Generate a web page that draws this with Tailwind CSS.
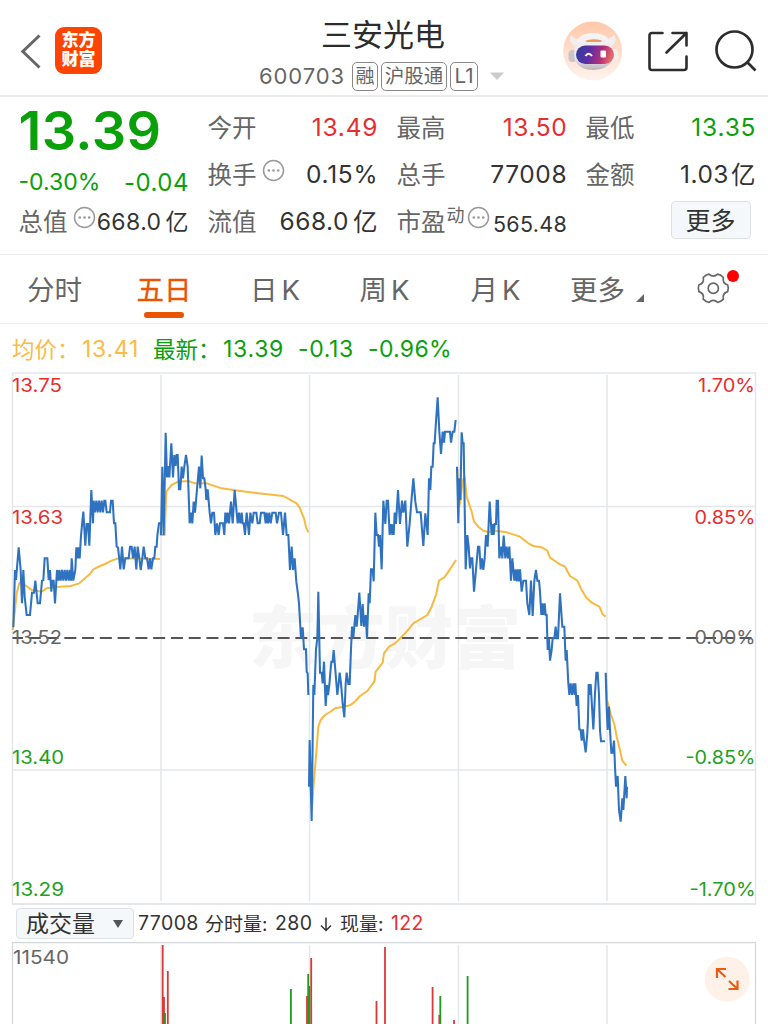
<!DOCTYPE html>
<html lang="zh-CN">
<head>
<meta charset="utf-8">
<title>三安光电 600703</title>
<script src="https://cdn.jsdelivr.net/npm/@tailwindcss/browser@4"></script>
</head>
<body class="w-[768px] h-[1024px] overflow-hidden bg-white font-['Inter','Noto_Sans_CJK_SC',sans-serif] text-[#333] whitespace-nowrap">
<div class="flex h-[1024px] flex-col overflow-hidden">

<!-- Title bar -->
<header class="flex h-[97px] shrink-0 border-b-2 border-[#ececec]">
  <div class="flex w-[259px] items-start pl-[20px] pt-[27px]">
    <svg class="mt-[7px] h-[36px] w-[22px]" viewBox="0 0 22 36" fill="none" stroke="#666" stroke-width="3"><path d="M19.5 1.5 2.8 17.5 19.5 33.5"/></svg>
    <div class="ml-[13px] flex h-[47px] w-[47px] flex-col items-center justify-center rounded-[9px] bg-[#ff4400] pb-px text-[17px] font-black leading-[19px] text-white"><span>东方</span><span>财富</span></div>
  </div>
  <div class="flex w-[249px] flex-col">
    <h1 class="mt-[13px] pl-[62px] text-[31px] leading-[44px] text-[#2c2c2c]">三安光电</h1>
    <div class="mt-[4px] flex h-[30px] items-center text-[#666]">
      <span class="w-[93px] text-[22px] tracking-[0.9px]">600703</span>
      <span class="flex h-[29px] w-[26px] items-center justify-center rounded-[5px] border border-[#888] pt-[2px] text-[19px]">融</span>
      <span class="ml-[3px] flex h-[29px] w-[66px] items-center justify-center rounded-[5px] border border-[#888] pt-[2px] text-[19.5px]">沪股通</span>
      <span class="ml-[3px] flex h-[29px] w-[28px] items-center justify-center rounded-[5px] border border-[#888] text-[20.5px]">L1</span>
      <svg class="ml-[12px] h-[8px] w-[14px] shrink-0" viewBox="0 0 14 8"><path d="M0 .5h14L7 8z" fill="#ccc"/></svg>
    </div>
  </div>
  <div class="flex items-start pl-[55px] pt-[21px]">
    <svg class="h-[60px] w-[60px]" viewBox="0 0 60 60">
      <defs>
        <linearGradient id="halo" x1="0" y1="0" x2="0" y2="1"><stop offset="0" stop-color="#ffc8a8"/><stop offset="1" stop-color="#fff3ee"/></linearGradient>
        <linearGradient id="head" x1="0" y1="0" x2="0" y2="1"><stop offset="0" stop-color="#f8f5f6"/><stop offset=".7" stop-color="#e9e5e8"/><stop offset="1" stop-color="#b9b5bd"/></linearGradient>
        <linearGradient id="visor" x1="0" y1="0" x2="1" y2=".15"><stop offset="0" stop-color="#2f3f9c"/><stop offset=".4" stop-color="#5a2fa6"/><stop offset=".75" stop-color="#b82e78"/><stop offset="1" stop-color="#e46a6a"/></linearGradient>
      </defs>
      <circle cx="29.700" cy="30" r="29.500" fill="url(#halo)"/>
      <path d="M8 14Q5 20 11 25L18 18Q11 19 8 14ZM51 13Q55 20 49 25L41 18Q49 18 51 13Z" fill="#f3eef0"/>
      <rect x="5.500" y="29" width="8" height="12" rx="4" fill="#c9c4cb"/><rect x="47" y="28" width="8" height="12" rx="4" fill="#f3eff2"/>
      <path d="M12 26Q14 12 30 12Q46 12 49 26Q54 48 30 49Q7 48 12 26Z" fill="url(#head)"/>
      <path d="M22 20Q29 17 39 19.500L38 21H24Z" fill="#e99a5c"/>
      <rect x="13" y="24.500" width="38" height="18.500" rx="9.200" fill="url(#visor)"/>
      <path d="M22.500 35Q25.500 30.500 29 35" fill="none" stroke="#fff" stroke-width="2"/>
      <rect x="37.500" y="29.500" width="5.500" height="7" rx="1" fill="#fff"/>
    </svg>
    <svg class="ml-[24px] mt-[8.500px] h-[42px] w-[42px]" viewBox="0 0 42 42" fill="none" stroke="#2d2d2d" stroke-width="2.600" stroke-linecap="round" stroke-linejoin="round"><path d="M15.500 3H5Q2.500 3 2.500 5.500V37.500Q2.500 40 5 40H37Q39.500 40 39.500 37.500V26.500M25.500 3H39.500V15.500M39.500 3 19.500 22.500"/></svg>
    <svg class="ml-[25px] mt-[8px] h-[44px] w-[44px]" viewBox="0 0 44 44" fill="none" stroke="#2d2d2d" stroke-width="2.700"><circle cx="20.500" cy="20.500" r="18"/><path d="M32.800 32.800 41.500 41.500"/></svg>
  </div>
</header>

<!-- Quote summary -->
<section class="grid h-[158px] shrink-0 grid-cols-[170px_170px_170px_170px] grid-rows-[47px_47px_47px] gap-x-[19px] border-b border-[#eee] pl-[18.500px] pt-[7px] text-[24.500px]">
  <div class="row-span-2 flex flex-col text-[#0aa00a]">
    <div class="text-[54px] font-semibold leading-[54px] tracking-[0.400px]">13.39</div>
    <div class="mt-[10px] flex items-center justify-between leading-[26px]"><span class="text-[23px]">-0.30%</span><span class="mr-[-0.500px] pt-[2px] text-[24px] tracking-[0.500px]">-0.04</span></div>
  </div>
  <div class="flex items-center justify-between"><span class="pt-[2px] text-[#666]">今开</span><span class="mr-[-0.800px] text-[24.500px] tracking-[0.800px] text-[#e62e2e]">13.49</span></div>
  <div class="flex items-center justify-between"><span class="pt-[2px] text-[#666]">最高</span><span class="mr-[-0.800px] text-[24.500px] tracking-[0.600px] text-[#e62e2e]">13.50</span></div>
  <div class="flex items-center justify-between"><span class="pt-[2px] text-[#666]">最低</span><span class="mr-[-0.800px] text-[24.500px] tracking-[0.800px] text-[#0aa00a]">13.35</span></div>

  <div class="flex items-center justify-between"><span class="flex items-center pt-[2px] text-[#666]">换手<svg class="mb-[11px] ml-[5px] size-[23px]" viewBox="0 0 23 23" fill="#999"><circle cx="11.500" cy="11.500" r="10" fill="none" stroke="#999" stroke-width="1.500"/><circle cx="6.800" cy="11.500" r="1.300"/><circle cx="11.500" cy="11.500" r="1.300"/><circle cx="16.200" cy="11.500" r="1.300"/></svg></span><span class="mr-[-0.700px] text-[24.500px] tracking-[0.700px]">0.15%</span></div>
  <div class="flex items-center justify-between"><span class="pt-[2px] text-[#666]">总手</span><span class="mr-[-0.700px] text-[24.500px] tracking-[0.600px]">77008</span></div>
  <div class="flex items-center justify-between"><span class="pt-[2px] text-[#666]">金额</span><span class="flex items-center text-[24.500px] tracking-[0.500px]">1.03<span class="ml-[2px] pt-[2px] tracking-normal">亿</span></span></div>

  <div class="flex items-center justify-between"><span class="flex items-center pt-[2px] text-[#666]">总值<svg class="mb-[11px] ml-[5px] size-[23px]" viewBox="0 0 23 23" fill="#999"><circle cx="11.500" cy="11.500" r="10" fill="none" stroke="#999" stroke-width="1.500"/><circle cx="6.800" cy="11.500" r="1.300"/><circle cx="11.500" cy="11.500" r="1.300"/><circle cx="16.200" cy="11.500" r="1.300"/></svg></span><span class="flex items-center pt-px text-[23px] tracking-[0.400px]">668.0<span class="ml-[4px] pt-px tracking-normal">亿</span></span></div>
  <div class="flex items-center justify-between"><span class="pt-[2px] text-[#666]">流值</span><span class="flex items-center text-[24.500px] tracking-[0.500px]">668.0<span class="ml-[4px] pt-[2px] tracking-normal">亿</span></span></div>
  <div class="flex items-center justify-between"><span class="flex items-center pt-[2px] text-[#666]">市盈<span class="mb-[14px] ml-[1px] text-[18px] leading-none">动</span><svg class="mb-[11px] ml-[2px] size-[23px]" viewBox="0 0 23 23" fill="#999"><circle cx="11.500" cy="11.500" r="10" fill="none" stroke="#999" stroke-width="1.500"/><circle cx="6.800" cy="11.500" r="1.300"/><circle cx="11.500" cy="11.500" r="1.300"/><circle cx="16.200" cy="11.500" r="1.300"/></svg></span><span class="mr-[-0.500px] mt-[5px] text-[21.500px] tracking-[0.300px]">565.48</span></div>
  <div class="flex items-start justify-end"><button class="mr-[5px] mt-[3px] flex h-[38px] w-[80px] items-center justify-center rounded-[4px] border border-[#dde2e5] bg-[#f5f8fa] pt-[3px] text-[25px]">更多</button></div>
</section>

<!-- Period tabs -->
<nav class="flex h-[69px] shrink-0 border-b border-[#eee] text-[27.500px] leading-[40px] text-[#666]">
  <div class="flex w-[109px] justify-center pt-[15px]">分时</div>
  <div class="flex w-[110px] flex-col items-center pt-[15px] text-[#ea5504] [-webkit-text-stroke:0.3px_#ea5504]">五日<span class="mt-[2px] h-[6px] w-[40px] rounded-full bg-[#ea5504]"></span></div>
  <div class="flex w-[112px] justify-center gap-[4px] pt-[15px]"><span>日</span><span>K</span></div>
  <div class="flex w-[107px] justify-center gap-[4px] pt-[15px]"><span>周</span><span>K</span></div>
  <div class="flex w-[115px] justify-center gap-[4px] pt-[15px]"><span>月</span><span>K</span></div>
  <div class="flex w-[128px] pl-[17px] pt-[15px]">更多<svg class="ml-[11px] mt-[24px] size-[8px]" viewBox="0 0 9 9"><path d="M9 0V9H0z" fill="#666"/></svg></div>
  <div class="pt-[13px]"><svg class="h-[40px] w-[64px]" viewBox="0 0 64 40" fill="none" stroke="#666" stroke-width="1.700" stroke-linejoin="round"><g transform="translate(32.300 20.300) scale(.97)"><path d="M14.900-3.400Q16 0 14.900 3.400Q9 5.200 10.400 11.200Q8 13.900 4.500 14.600Q0 10.400-4.500 14.600Q-8 13.900-10.400 11.200Q-9 5.200-14.900 3.400Q-16 0-14.900-3.400Q-9-5.200-10.400-11.200Q-8-13.900-4.500-14.600Q0-10.400 4.500-14.600Q8-13.900 10.400-11.200Q9-5.200 14.900-3.400Z"/><circle r="5.300"/></g><circle cx="52" cy="8" r="6" fill="#f00" stroke="none"/></svg></div>
</nav>

<!-- Average / latest price -->
<div class="flex h-[50px] mb-[-2px] shrink-0 items-center pl-[12px] text-[23px] tracking-[0.300px] text-[#0aa00a]">
  <span class="w-[70px] pt-px text-[22.500px] tracking-normal text-[#fbbb45]">均价：</span><span class="w-[71px] tracking-[0.700px] text-[#fbbb45]">13.41</span>
  <span class="w-[70px] pt-px text-[22.500px] tracking-normal">最新：</span><span class="w-[75px] tracking-[0.700px]">13.39</span><span class="w-[70px] tracking-[0.600px]">-0.13</span><span>-0.96%</span>
</div>

<!-- Five-day price chart -->
<svg class="h-[533px] w-[768px] shrink-0" viewBox="0 372 768 533" fill="none">
  <text x="249" y="663" font-size="68" font-weight="900" fill="#f6f6f6" textLength="272" font-family="Noto Sans CJK SC">东方财富</text>
  <g stroke="#e3e7ea" stroke-width="1.500">
    <path d="M12.500 373H755.500V904M12.500 373V904"/><path d="M12 904H756" stroke-width="2"/>
    <path d="M161 375V901M309.500 375V901M458.500 375V901M607 375V901M13 506.500H755M13 770H755"/>
  </g>
  <path d="M12.500 638H755" stroke="#555" stroke-width="1.800" stroke-dasharray="12 5.770" stroke-dashoffset="1.500"/>
  <g stroke="#f8b941" stroke-width="6" stroke-linejoin="round">
    <g transform="translate(0 370) scale(.33333)"><polyline points="38,780 45,720 50,670 58,640 64,632 75,645 95,660 125,665 140,655 160,652 212,648 238,640 260,620 270,612 280,598 300,588 315,582 335,572 355,565 480,567"/></g>
    <g transform="translate(155 400) scale(.33333)"><polyline points="17,370 17,405 29,405 34,275 50,255 70,245 100,243 120,250 155,250 200,265 250,272 310,280 385,288 410,302 425,310 435,325 447,355 453,382 460,397"/></g>
    <g transform="translate(290 560) scale(.33333)"><polyline points="59,630 66,750 71,670 78,590 85,500 92,480 105,465 120,456 135,445 160,440 180,436 195,425 210,408 232,393 253,365 257,335 278,308 282,280 297,260 315,250 330,235 350,215 370,190 412,165 425,140 438,105 447,62 463,52 480,28 498,0"/></g>
    <g transform="translate(340 380) scale(.33333)"><polyline points="352,265 357,380 362,360 368,300 374,292 380,350 395,395 402,425 415,440 430,452 445,456 470,452 500,457 540,470 565,490 580,498 605,502 622,512 630,533 645,543 660,553 675,560 690,588 712,602 725,630 738,652 755,668 778,680 788,703 797,710"/></g>
    <g transform="translate(500 500) scale(.33333)"><polyline points="318,520 321,600 333,645 343,672 350,710 360,750 367,782 379,797"/></g>
  </g>
  <g stroke="#2f73c0" stroke-width="6.200" stroke-linejoin="miter" stroke-miterlimit="2">
    <g transform="translate(0 370) scale(.33333)"><polyline points="40,772 45,600 48,630 56,532 62,600 66,700 70,600 74,680 80,735 90,735 96,668 102,668 106,632 113,700 120,700 126,632 130,630 134,565 142,565 146,630 150,600 154,665 157,632 161,632 165,700 171,600 175,632 178,600 182,632 186,600 190,632 194,600 198,632 202,600 206,632 210,600 213,632 215,565 220,632 226,600 229,532 233,565 236,532 239,565 243,497 250,425 256,527 260,462 264,462 268,527 274,360 279,460 281,392 285,427 289,392 293,427 297,392 301,427 305,392 309,427 313,392 316,392 320,427 330,427 333,392 338,392 342,460 346,460 350,530 354,532 361,598 366,530 371,598 376,565 386,565 390,530 395,530 399,565 404,530 409,598 413,530 418,565 422,600 427,565 431,530 436,565 441,565 446,598 450,565 454,598 459,565 463,565 466,530 470,530 472,497 477,460 484,460"/></g>
    <g transform="translate(155 400) scale(.33333)"><polyline points="18,405 22,200 26,405 32,98 36,232 40,198 43,232 49,130 54,232 58,165 62,198 65,165 68,165 72,268 76,268 80,200 84,235 88,200 93,165 98,200 104,370 108,338 112,370 116,305 120,338 126,268 132,200 136,265 140,167 144,235 148,235 152,268 154,300 158,268 164,338 168,370 172,338 177,338 181,405 186,370 191,405 195,370 204,370 208,405 211,338 214,370 218,338 222,370 228,305 233,370 239,270 245,338 248,370 252,338 256,370 260,338 263,370 266,370 270,405 275,338 282,405 286,338 292,370 296,338 304,338 308,370 314,370 318,338 328,338 332,370 335,338 339,370 343,338 347,370 352,338 362,338 366,370 372,338 378,338 384,405 390,338 395,405 400,405 405,510 410,440 414,510 419,475 424,545 428,575 432,610 436,680 438,715 443,682 447,748 453,748 455,815 458,820 460,885"/></g>
    <g transform="translate(290 560) scale(.33333)"><polyline points="57,680 59,540 65,783 70,375 73,405 78,268 82,235 85,95 90,338 95,338 98,370 102,305 107,438 111,375 114,405 118,375 121,338 124,305 128,305 131,270 136,330 142,405 146,370 149,338 153,370 158,430 163,472 167,372 170,338 175,372 179,372 183,268 186,200 190,232 196,165 200,200 203,165 208,98 214,198 218,132 222,200 227,165 231,235 236,100 239,130 243,28 248,28 251,64 256,-142 260,-75 264,-75 267,-40 270,-75 275,28 280,-178 286,-108 290,-178 294,-178 299,-75 303,-108 307,-75 310,-108 311,-75 314,-142 318,-108 324,-210 330,-108 336,-178 340,-142 346,-178 352,-40 359,-110 364,-175 370,-245 376,-175 381,-143 392,-143 400,-42 406,-140 413,-75 417,-245 421,-210 424,-280 428,-280 431,-350 434,-350 436,-385 443,-488 448,-385 453,-318 458,-385 462,-352 465,-385 480,-385 483,-352 488,-385 493,-385 497,-420"/></g>
    <g transform="translate(340 380) scale(.33333)"><polyline points="351,260 355,430 358,295 361,360 365,157 368,190 371,190 377,568 382,465 386,500 390,565 393,535 397,535 402,635 408,568 414,500 418,500 422,568 426,535 430,570 434,535 438,465 443,500 449,365 455,465 458,432 461,465 464,432 468,432 470,362 474,362 478,535 484,500 487,535 491,467 496,535 500,500 504,535 508,500 513,602 517,535 520,568 523,602 527,568 530,604 534,568 537,604 540,568 545,635 550,602 558,602 562,670 568,705 573,602 578,708 583,602 588,570 592,602 597,602 600,635 604,705 607,670 610,705 614,670 617,705 620,705 623,810 627,775 630,842 635,810 638,775 643,775 647,740 651,775 654,775 660,640 667,740 673,740 677,842 680,810 685,910 688,945 692,910 696,945 700,910 704,945 706,910 710,978 714,945 718,1048 722,1050 725,1082 729,1048 732,1080 737,1117 742,1060 744,1015 746,912 749,945 752,912 756,980 760,1048 765,940 769,878 773,878 777,945 780,1050 783,1084 795,1084"/></g>
    <g transform="translate(500 500) scale(.33333)"><polyline points="317,518 320,620 323,690 327,620 330,690 334,758 338,758 342,722 345,800 348,860 353,828 357,930 362,965 367,895 370,930 376,828 380,895 381,860"/></g>
  </g>
  <g font-family="Inter" font-size="18.500">
    <g fill="#e62e2e"><text x="12" y="391.500" textLength="50" lengthAdjust="spacingAndGlyphs">13.75</text><text x="12" y="524" textLength="51" lengthAdjust="spacingAndGlyphs">13.63</text><text x="698" y="391.500" textLength="57" lengthAdjust="spacingAndGlyphs">1.70%</text><text x="694.500" y="524" textLength="61" lengthAdjust="spacingAndGlyphs">0.85%</text></g>
    <g fill="#666"><text x="12" y="644" textLength="50" lengthAdjust="spacingAndGlyphs">13.52</text><text x="694.500" y="644" textLength="61" lengthAdjust="spacingAndGlyphs">0.00%</text></g>
    <g fill="#22a022"><text x="12" y="763.500" textLength="52" lengthAdjust="spacingAndGlyphs">13.40</text><text x="12" y="896" textLength="52" lengthAdjust="spacingAndGlyphs">13.29</text><text x="685.500" y="763.500" textLength="70" lengthAdjust="spacingAndGlyphs">-0.85%</text><text x="689.500" y="896" textLength="66" lengthAdjust="spacingAndGlyphs">-1.70%</text></g>
  </g>
</svg>

<!-- Volume legend -->
<div class="flex h-[37px] shrink-0 items-center pl-[16px] text-[19px]">
  <button class="flex h-[31px] w-[118px] items-center rounded-[4px] border border-[#dde2e5] bg-[#f5f8fa] pl-[9px] pt-[2px] text-[23px]">成交量<svg class="mb-[2px] ml-[18px] h-[8px] w-[10px]" viewBox="0 0 10 8"><path d="M0 0h10L5 8z" fill="#555"/></svg></button>
  <span class="ml-[4px] w-[67px] pt-px text-[19.500px] tracking-[0.400px]">77008</span><span class="w-[70px] pt-[3px]">分时量:</span><span class="w-[44px] pt-px text-[19.500px] tracking-[0.400px]">280</span><span class="w-[21px]"><svg class="h-[16px] w-[14px]" viewBox="0 0 14 16" fill="none" stroke="#333" stroke-width="1.500"><path d="M7 1.500V14M2 9.500 7 14.500 12 9.500"/></svg></span><span class="w-[51px] pt-[3px]">现量:</span><span class="pt-px text-[19.500px] tracking-[0.400px] text-[#e62e2e]">122</span>
</div>

<!-- Volume chart -->
<svg class="h-[82px] w-[768px] shrink-0" viewBox="0 942 768 82" fill="none">
  <path d="M12.500 1024V942.700H755.500V1024" stroke="#d3d7da" stroke-width="1.300"/>
  <path d="M161 945V1024M309.500 945V1024M458.500 945V1024M607 945V1024" stroke="#e3e7ea" stroke-width="1.500"/>
  <g stroke-width="1.800">
    <path d="M162.700 945V1024M164 997V1024M167.800 971V1024M307 996V1024M311.200 958V1024M376.500 1001V1024M385 947V1024M432.600 987V1024M439.300 1015V1024M454 1020V1024" stroke="#dc3838"/>
    <path d="M165 1013V1024M290.900 989V1024M308.200 974V1024M309.300 986V1024M440.300 996V1024M467.600 976V1024" stroke="#1c9d1c"/>
  </g>
  <text x="13" y="964" font-family="Inter" font-size="19" fill="#666" textLength="56" lengthAdjust="spacingAndGlyphs">11540</text>
  <circle cx="727.200" cy="979.300" r="22.500" fill="#fdf1e8"/>
  <path d="M717 978V969H726M717.500 969.500 725.500 977M737.500 980.500V989H728.500M737 988.500 729 981" stroke="#ea5c14" stroke-width="2.200"/>
</svg>
</div>
</body>
</html>
